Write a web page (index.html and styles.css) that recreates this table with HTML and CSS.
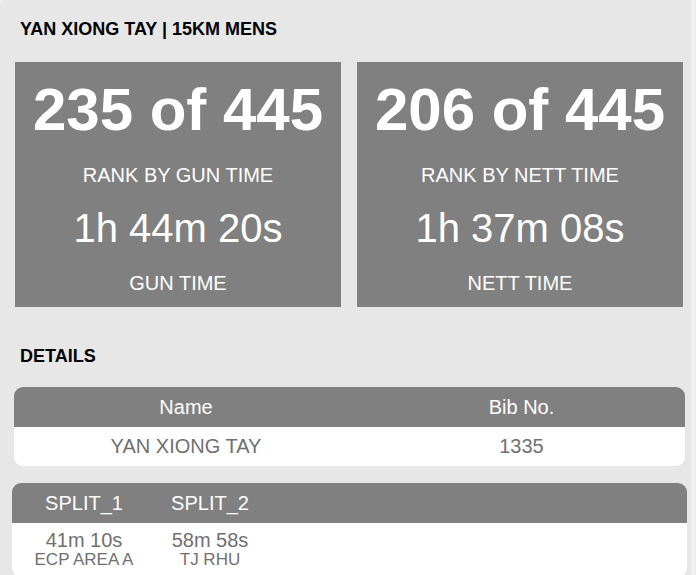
FILE: index.html
```html
<!DOCTYPE html>
<html>
<head>
<meta charset="utf-8">
<link rel="stylesheet" href="styles.css">
</head>
<body>
<div class="page">
  <h5 class="heading title">YAN XIONG TAY | 15KM MENS</h5>
  <div class="cards">
    <div class="card">
      <div class="big">235 of 445</div>
      <div class="label rank">RANK BY GUN TIME</div>
      <div class="time">1h 44m 20s</div>
      <div class="label foot">GUN TIME</div>
    </div>
    <div class="card">
      <div class="big">206 of 445</div>
      <div class="label rank">RANK BY NETT TIME</div>
      <div class="time">1h 37m 08s</div>
      <div class="label foot">NETT TIME</div>
    </div>
  </div>
  <h5 class="heading details">DETAILS</h5>
  <div class="table info">
    <div class="thead info-cols">
      <div class="th">Name</div>
      <div class="th">Bib No.</div>
    </div>
    <div class="tbody info-cols">
      <div class="td">YAN XIONG TAY</div>
      <div class="td">1335</div>
    </div>
  </div>
  <div class="table splits">
    <div class="thead split-cols">
      <div class="th">SPLIT_1</div>
      <div class="th">SPLIT_2</div>
    </div>
    <div class="tbody split-cols split-body">
      <div class="split">
        <div class="split-time">41m 10s</div>
        <div class="split-loc">ECP AREA A</div>
      </div>
      <div class="split">
        <div class="split-time">58m 58s</div>
        <div class="split-loc">TJ RHU</div>
      </div>
    </div>
  </div>
</div>
</body>
</html>
```

FILE: styles.css
```css
html, body {
  margin: 0;
  padding: 0;
  background: #efefef;
  font-family: "Liberation Sans", Arial, sans-serif;
}

.page {
  width: 691px;
  min-height: 575px;
  box-sizing: border-box;
  background: #e7e7e7;
  border-top-left-radius: 6px;
  padding: 19px 8px 0 15px;
}

.heading {
  margin: 0;
  font-size: 18px;
  line-height: 20px;
  font-weight: bold;
  color: #000;
  padding-left: 5px;
}

.cards {
  display: grid;
  grid-template-columns: 326px 326px;
  column-gap: 16px;
  margin-top: 23px;
}

.card {
  background: #808080;
  color: #fff;
  text-align: center;
  padding: 13px 0 12px;
  height: 245px;
  box-sizing: border-box;
}

.big {
  font-size: 60px;
  line-height: 70px;
  font-weight: bold;
}

.label {
  font-size: 20px;
  line-height: 23px;
}

.rank {
  margin-top: 19px;
}

.time {
  font-size: 40px;
  line-height: 46px;
  margin-top: 18px;
}

.foot {
  margin-top: 21px;
}

.details {
  margin-top: 39px;
}

.table {
  border-radius: 9px;
  overflow: hidden;
  background: #fff;
}

.info {
  margin: 21px -2px 0 -1px;
}

.splits {
  margin: 17px -4px 0 -3px;
}

.thead {
  background: #808080;
  color: #fff;
  height: 40px;
  align-items: center;
}

.th, .td {
  text-align: center;
  font-size: 20px;
  line-height: 23px;
}

.info-cols {
  display: grid;
  grid-template-columns: 344px 1fr;
}

.info .tbody {
  height: 39px;
  align-items: center;
  color: #707070;
}

.split-cols {
  display: grid;
  grid-template-columns: 124px 128px;
  padding-left: 10px;
}

.split-body {
  padding-top: 6px;
  padding-bottom: 8px;
  color: #707070;
}

.split {
  text-align: center;
}

.split-time {
  font-size: 20px;
  line-height: 22px;
}

.split-loc {
  font-size: 17px;
  line-height: 18px;
}
```
